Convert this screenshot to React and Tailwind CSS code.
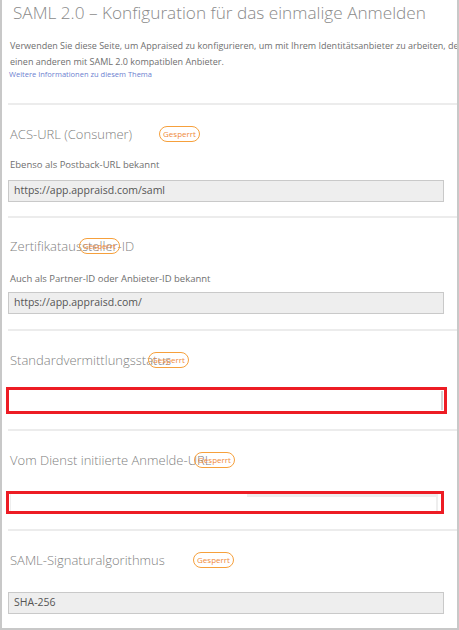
import React from 'react';

const font = { fontFamily: '"Open Sans", "Liberation Sans", sans-serif' };

const Badge = () => (
    <span className="inline-flex items-center justify-center w-[41px] h-[16px] rounded-full border border-[#f6a03c] text-[8px] text-[#ef8a3a] leading-none">
        Gesperrt
    </span>
);

const Label = ({ text, width }) => (
    <div className="flex items-center h-[16px] pl-[2px]">
        <span className={`${width} shrink-0 whitespace-nowrap text-[13px] font-light text-[#7f7f7f] leading-none`}>{text}</span>
        <Badge />
    </div>
);

const Field = ({ value, className = '' }) => (
    <div className={`w-[436px] h-[22px] bg-[#eeeeee] border border-[#c9c9c9] flex items-center pl-[5px] text-[10.5px] text-[#555555] ${className}`}>
        {value}
    </div>
);

const App = () => {
    return (
        <div style={font} className="w-[459px] h-[630px] bg-white border-x-2 border-b-2 border-[#c8c8c8] overflow-hidden">
            <h1 className="pl-[11px] pt-[1px] h-[24px] text-[17.2px] font-light text-[#8a8a8a] leading-[24px] whitespace-nowrap">
                SAML 2.0 – Konfiguration für das einmalige Anmelden
            </h1>
            <div className="pl-[8px] mt-[14px] text-[9px] text-[#6f6f6f] leading-[16px] whitespace-nowrap">
                <p>Verwenden Sie diese Seite, um Appraised zu konfigurieren, um mit Ihrem Identitätsanbieter zu arbeiten, den</p>
                <p>einen anderen mit SAML 2.0 kompatiblen Anbieter.</p>
            </div>
            <a className="block -mt-[2px] pl-[7px] text-[7.5px] text-[#6d7fd0] leading-[12px]">Weitere Informationen zu diesem Thema</a>

            <div className="ml-[6px] mt-[23px]">
                {/* ACS-URL */}
                <section className="border-t-2 border-[#ececec] pt-[21px] pb-[14px]">
                    <Label text="ACS-URL (Consumer)" width="w-[149px]" />
                    <p className="mt-[17px] pl-[2px] text-[9.5px] text-[#6f6f6f] leading-[12px]">Ebenso als Postback-URL bekannt</p>
                    <Field value="https://app.appraisd.com/saml" className="mt-[9px]" />
                </section>

                {/* Zertifikataussteller-ID */}
                <section className="border-t-2 border-[#ececec] pt-[20px] pb-[15px]">
                    <Label text="Zertifikataussteller-ID" width="w-[69px]" />
                    <p className="mt-[19px] pl-[2px] text-[9.5px] text-[#6f6f6f] leading-[12px]">Auch als Partner-ID oder Anbieter-ID bekannt</p>
                    <Field value="https://app.appraisd.com/" className="mt-[7px]" />
                </section>

                {/* Standardvermittlungsstatus */}
                <section className="border-t-2 border-[#ececec] pt-[21px] pb-[15px]">
                    <Label text="Standardvermittlungsstatus" width="w-[138px]" />
                    <div className="mt-[19px] -ml-[2px] w-[441px] h-[27px] border-[3px] border-[#ed1c24] flex">
                        <div className="flex-1" />
                        <div className="w-[2px] mt-[1px] mb-[1px] mr-[1px] bg-[#d4d4d4]" />
                    </div>
                </section>

                {/* Vom Dienst initiierte Anmelde-URL */}
                <section className="border-t-2 border-[#ececec] pt-[21px] pb-[15px]">
                    <Label text="Vom Dienst initiierte Anmelde-URL" width="w-[184px]" />
                    <div className="mt-[23px] -ml-[2px] w-[438px] h-[23px] border-[3px] border-[#ed1c24] flex">
                        <div className="w-[1px] ml-[1px] bg-[#eeeeee]" />
                        <div className="flex-1 flex flex-col">
                            <div className="h-[3px] ml-[236px] bg-[#eeeeee]" />
                        </div>
                        <div className="w-[2px] mr-[3px] bg-[#eeeeee]" />
                    </div>
                </section>

                {/* SAML-Signaturalgorithmus */}
                <section className="border-t-2 border-[#ececec] pt-[21px] pb-[15px]">
                    <Label text="SAML-Signaturalgorithmus" width="w-[183px]" />
                    <Field value="SHA-256" className="mt-[24px]" />
                </section>
            </div>
        </div>
    );
};

export default App;
